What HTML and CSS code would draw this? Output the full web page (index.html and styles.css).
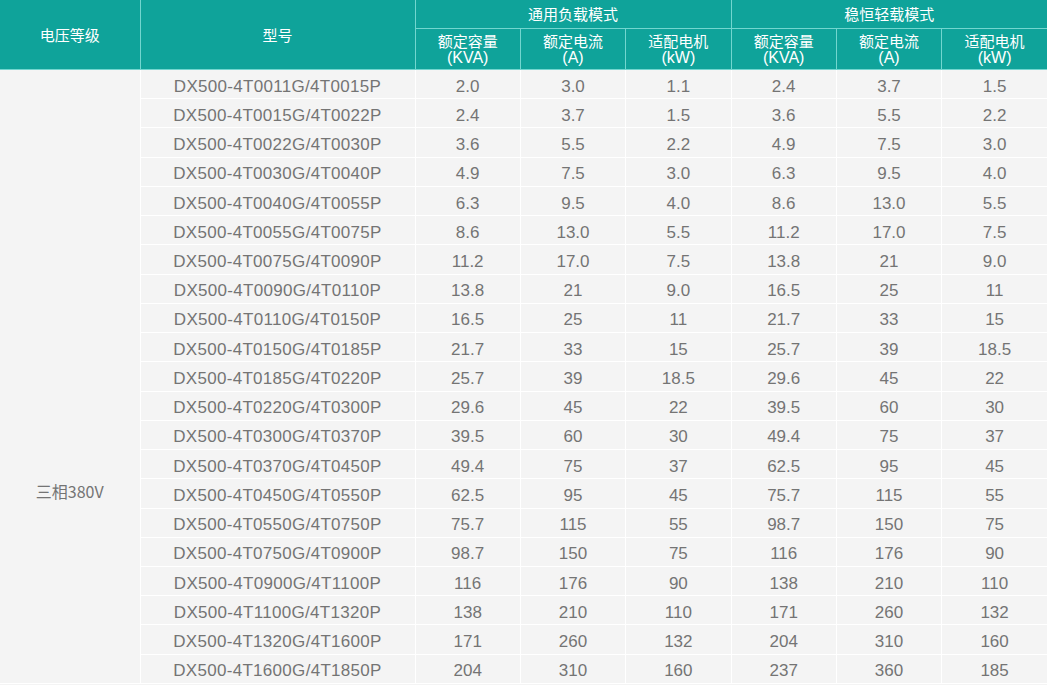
FILE: index.html
```html
<!DOCTYPE html>
<html lang="zh-CN">
<head>
<meta charset="utf-8">
<title>DX500 选型表</title>
<link rel="stylesheet" href="styles.css">
</head>
<body>
<table class="spec">
  <colgroup>
    <col class="c-volt"><col class="c-model">
    <col class="c-n"><col class="c-n"><col class="c-n">
    <col class="c-n"><col class="c-n"><col class="c-n">
  </colgroup>
  <thead>
    <tr class="h1">
      <th rowspan="2">电压等级</th>
      <th rowspan="2">型号</th>
      <th colspan="3">通用负载模式</th>
      <th colspan="3">稳恒轻载模式</th>
    </tr>
    <tr class="h2">
      <th><span class="zh">额定容量</span><span class="unit">(KVA)</span></th>
      <th><span class="zh">额定电流</span><span class="unit">(A)</span></th>
      <th><span class="zh">适配电机</span><span class="unit">(kW)</span></th>
      <th><span class="zh">额定容量</span><span class="unit">(KVA)</span></th>
      <th><span class="zh">额定电流</span><span class="unit">(A)</span></th>
      <th><span class="zh">适配电机</span><span class="unit">(kW)</span></th>
    </tr>
  </thead>
  <tbody>
    <tr><td class="volt" rowspan="21">三相380V</td><td class="model">DX500-4T0011G/4T0015P</td><td>2.0</td><td>3.0</td><td>1.1</td><td>2.4</td><td>3.7</td><td>1.5</td></tr>
    <tr><td class="model">DX500-4T0015G/4T0022P</td><td>2.4</td><td>3.7</td><td>1.5</td><td>3.6</td><td>5.5</td><td>2.2</td></tr>
    <tr><td class="model">DX500-4T0022G/4T0030P</td><td>3.6</td><td>5.5</td><td>2.2</td><td>4.9</td><td>7.5</td><td>3.0</td></tr>
    <tr><td class="model">DX500-4T0030G/4T0040P</td><td>4.9</td><td>7.5</td><td>3.0</td><td>6.3</td><td>9.5</td><td>4.0</td></tr>
    <tr><td class="model">DX500-4T0040G/4T0055P</td><td>6.3</td><td>9.5</td><td>4.0</td><td>8.6</td><td>13.0</td><td>5.5</td></tr>
    <tr><td class="model">DX500-4T0055G/4T0075P</td><td>8.6</td><td>13.0</td><td>5.5</td><td>11.2</td><td>17.0</td><td>7.5</td></tr>
    <tr><td class="model">DX500-4T0075G/4T0090P</td><td>11.2</td><td>17.0</td><td>7.5</td><td>13.8</td><td>21</td><td>9.0</td></tr>
    <tr><td class="model">DX500-4T0090G/4T0110P</td><td>13.8</td><td>21</td><td>9.0</td><td>16.5</td><td>25</td><td>11</td></tr>
    <tr><td class="model">DX500-4T0110G/4T0150P</td><td>16.5</td><td>25</td><td>11</td><td>21.7</td><td>33</td><td>15</td></tr>
    <tr><td class="model">DX500-4T0150G/4T0185P</td><td>21.7</td><td>33</td><td>15</td><td>25.7</td><td>39</td><td>18.5</td></tr>
    <tr><td class="model">DX500-4T0185G/4T0220P</td><td>25.7</td><td>39</td><td>18.5</td><td>29.6</td><td>45</td><td>22</td></tr>
    <tr><td class="model">DX500-4T0220G/4T0300P</td><td>29.6</td><td>45</td><td>22</td><td>39.5</td><td>60</td><td>30</td></tr>
    <tr><td class="model">DX500-4T0300G/4T0370P</td><td>39.5</td><td>60</td><td>30</td><td>49.4</td><td>75</td><td>37</td></tr>
    <tr><td class="model">DX500-4T0370G/4T0450P</td><td>49.4</td><td>75</td><td>37</td><td>62.5</td><td>95</td><td>45</td></tr>
    <tr><td class="model">DX500-4T0450G/4T0550P</td><td>62.5</td><td>95</td><td>45</td><td>75.7</td><td>115</td><td>55</td></tr>
    <tr><td class="model">DX500-4T0550G/4T0750P</td><td>75.7</td><td>115</td><td>55</td><td>98.7</td><td>150</td><td>75</td></tr>
    <tr><td class="model">DX500-4T0750G/4T0900P</td><td>98.7</td><td>150</td><td>75</td><td>116</td><td>176</td><td>90</td></tr>
    <tr><td class="model">DX500-4T0900G/4T1100P</td><td>116</td><td>176</td><td>90</td><td>138</td><td>210</td><td>110</td></tr>
    <tr><td class="model">DX500-4T1100G/4T1320P</td><td>138</td><td>210</td><td>110</td><td>171</td><td>260</td><td>132</td></tr>
    <tr><td class="model">DX500-4T1320G/4T1600P</td><td>171</td><td>260</td><td>132</td><td>204</td><td>310</td><td>160</td></tr>
    <tr><td class="model">DX500-4T1600G/4T1850P</td><td>204</td><td>310</td><td>160</td><td>237</td><td>360</td><td>185</td></tr>
  </tbody>
</table>
</body>
</html>
```

FILE: styles.css
```css
html, body {
  margin: 0;
  padding: 0;
  background: #f4f4f4;
  overflow: hidden;
}

.spec {
  width: 1047px;
  border-collapse: collapse;
  table-layout: fixed;
  font-family: "Liberation Sans", "Noto Sans CJK SC", sans-serif;
  color: #747474;
}

.c-volt { width: 140px; }
.c-model { width: 275px; }
.c-n { width: 105.33px; }

.spec th {
  background: #0fa39a;
  color: #ffffff;
  font-weight: normal;
  font-family: "Noto Sans CJK SC", "Liberation Sans", sans-serif;
  font-size: 15px;
  line-height: 18px;
  border: 1px solid #72d6cf;
  padding: 0;
  text-align: center;
}

.spec thead tr:first-child th { border-top: none; }
.spec th:first-child { border-left: none; }
.spec tr th:last-child { border-right: none; }

.h1 th { height: 28px; }
.h1 th[rowspan] { height: auto; }
.h2 th { height: 40px; padding-top: 0; }

.zh, .unit {
  display: block;
  line-height: 17px;
}

.unit {
  font-family: "Liberation Sans", sans-serif;
  font-size: 16px;
  line-height: 18px;
}

.spec td {
  height: 23.24px;
  padding: 5px 0 0 0;
  border: 1px solid #ffffff;
  text-align: center;
  font-size: 17px;
  line-height: 20px;
  background: #f4f4f4;
}

.spec tr td:last-child { border-right: none; }

.spec td.volt {
  border-left: none;
  font-family: "Noto Sans CJK SC", "Liberation Sans", sans-serif;
  font-size: 16px;
  vertical-align: top;
  padding-top: 411px;
}

.spec td.model {
  letter-spacing: 0.3px;
}
```
